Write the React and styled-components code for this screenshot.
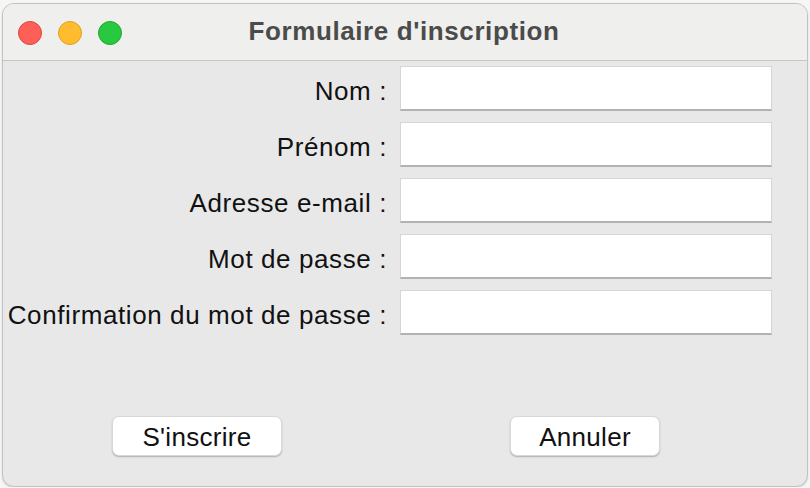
import React from "react";
import styled, { createGlobalStyle } from "styled-components";

const Global = createGlobalStyle`
  html, body { margin: 0; padding: 0; background: #f6f6f6; }
  body { font-family: "Liberation Sans", Arial, sans-serif; }
`;

const Window = styled.div`
  box-sizing: border-box;
  margin: 3px 0 0 2px;
  width: 806px;
  height: 484px;
  border: 1px solid #c2c2c2;
  border-radius: 12px;
  overflow: hidden;
  background: #e8e8e8;
  display: flex;
  flex-direction: column;
  box-shadow: 0 1px 2px rgba(0,0,0,0.15);
`;

const TitleBar = styled.div`
  position: relative;
  flex: 0 0 56px;
  background: #efefed;
  border-bottom: 1px solid #c6c6c6;
  display: flex;
  align-items: center;
  padding-left: 15px;
  gap: 16px;
`;

const Light = styled.span`
  width: 24px;
  height: 24px;
  border-radius: 50%;
  box-sizing: border-box;
  background: ${p => p.$c};
  border: 1px solid ${p => p.$b};
  margin-top: 2px;
`;

const Title = styled.div`
  position: absolute;
  left: 0;
  right: 0;
  top: 0;
  bottom: 0;
  display: flex;
  align-items: center;
  justify-content: center;
  font-weight: bold;
  font-size: 26px;
  letter-spacing: 0.6px;
  color: #4b4b4b;
  padding-right: 2px;
  padding-bottom: 2px;
  pointer-events: none;
`;

const Form = styled.div`
  display: grid;
  grid-template-columns: 384px 372px;
  column-gap: 13px;
  row-gap: 11px;
  padding-top: 5px;
`;

const Label = styled.label`
  font-size: 26px;
  letter-spacing: 0.6px;
  color: #111;
  text-align: right;
  align-self: center;
  padding-top: 5px;
  white-space: nowrap;
`;

const Input = styled.input`
  box-sizing: border-box;
  height: 45px;
  width: 372px;
  margin: 0;
  background: #fff;
  border: 1px solid #d6d6d6;
  border-bottom: 2px solid #b2b2b2;
  outline: none;
  font-size: 20px;
`;

const Buttons = styled.div`
  display: flex;
  padding-left: 109px;
  gap: 228px;
  margin-top: 81px;
`;

const Button = styled.button`
  box-sizing: border-box;
  width: ${p => p.$w}px;
  height: 40px;
  background: #fff;
  border: 1px solid #d8d8d8;
  border-radius: 7px;
  box-shadow: 0 1px 1.5px rgba(0,0,0,0.25);
  font-family: "Liberation Sans", Arial, sans-serif;
  font-size: 26px;
  letter-spacing: 0.3px;
  color: #111;
  padding: 2px 0 0;
`;

const fields = [
  "Nom :",
  "Prénom :",
  "Adresse e-mail :",
  "Mot de passe :",
  "Confirmation du mot de passe :",
];

export default function App() {
  return (
    <>
      <Global />
      <Window>
        <TitleBar>
          <Light $c="#fe5f57" $b="#e0443e" />
          <Light $c="#febc2e" $b="#dea123" />
          <Light $c="#28c840" $b="#1aab29" />
          <Title>Formulaire d'inscription</Title>
        </TitleBar>
        <Form>
          {fields.map((f) => (
            <React.Fragment key={f}>
              <Label>{f}</Label>
              <Input type={f.startsWith("Mot") || f.startsWith("Conf") ? "password" : "text"} />
            </React.Fragment>
          ))}
        </Form>
        <Buttons>
          <Button $w={170}>S'inscrire</Button>
          <Button $w={150}>Annuler</Button>
        </Buttons>
      </Window>
    </>
  );
}
